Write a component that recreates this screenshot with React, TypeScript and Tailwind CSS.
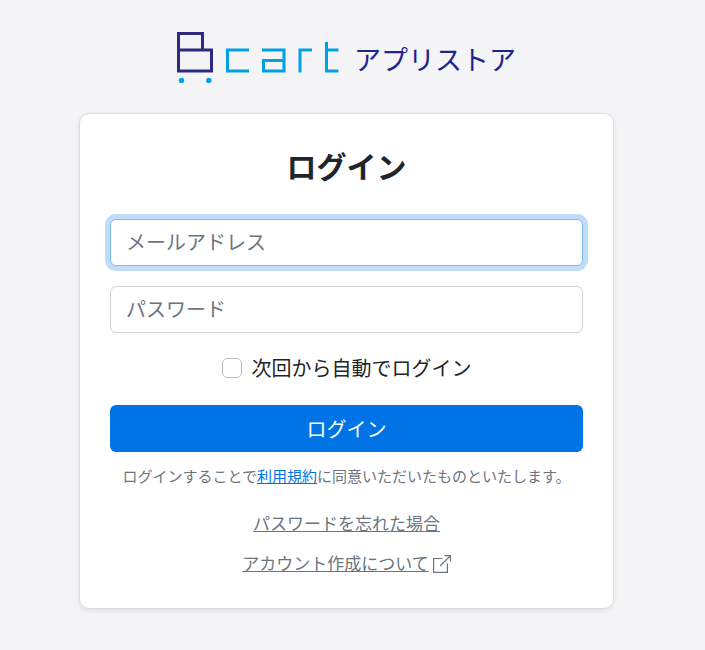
import { useState } from 'react'
import type { FormEvent, InputHTMLAttributes } from 'react'

function BcartLogo() {
  return (
    <svg width="162" height="52" viewBox="0 0 162 52" fill="none" strokeWidth="3" role="img" aria-label="Bcart">
      {/* カート */}
      <path d="M1.5 18V1.5H25.5V18M1.5 18H34.5V39H1.5Z" stroke="#2b2a80" />
      <circle cx="4.5" cy="48.4" r="2.7" fill="#00a0e6" />
      <circle cx="31.8" cy="48.4" r="2.7" fill="#00a0e6" />
      {/* c a r t */}
      <g stroke="#00a0e6">
        <path d="M72 18H50.5V39H72" />
        <path d="M85 18H107V39H86.5V28.5H107" />
        <path d="M123 40.5V18H135" />
        <path d="M149.5 10V39H161.5M149.5 18H161.5" />
      </g>
    </svg>
  )
}

function ExternalIcon() {
  return (
    <svg className="ml-1 inline-block align-[-3px]" width="18" height="18" viewBox="0 0 18 18" fill="none" stroke="currentColor" strokeWidth="1.2" aria-hidden="true">
      <path d="M9.5 3.5H0.6V17.4H14.4V8.5" />
      <path d="M7 11L17.2 0.8M11.5 0.6H17.4V6.5" />
    </svg>
  )
}

function TextField(props: InputHTMLAttributes<HTMLInputElement>) {
  return (
    <input
      {...props}
      className="block h-[47px] w-full rounded-md border border-[#ced4da] bg-white px-[15px] pb-[2px] text-[20px] text-[#212529] outline-none placeholder:text-[#6c757d] focus:border-[#80b9f3] focus:ring-[5px] focus:ring-[#bfdcf9]"
    />
  )
}

export default function App() {
  const [email, setEmail] = useState('')
  const [password, setPassword] = useState('')
  const [remember, setRemember] = useState(false)

  const handleSubmit = (e: FormEvent) => {
    e.preventDefault()
  }

  return (
    <div className="min-h-screen bg-[#f4f4f7] pt-8 pr-3 pb-10 font-['Noto_Sans_CJK_JP',sans-serif] text-[#212529]">
      <header className="flex h-[52px] justify-center gap-[15px]">
        <BcartLogo />
        <span className="text-[27px] leading-[54px] text-[#1d2590]">アプリストア</span>
      </header>

      <main className="mx-auto mt-[29px] max-w-[535px] rounded-[10px] border border-[#dcdddf] bg-white p-[30px] shadow-[0_2px_5px_rgba(0,0,0,0.08)]">
        <h1 className="mb-[33px] text-center text-[30px] leading-[42px] font-bold">ログイン</h1>

        <form onSubmit={handleSubmit}>
          <div className="flex flex-col gap-5">
            <TextField
              type="email"
              aria-label="メールアドレス"
              placeholder="メールアドレス"
              value={email}
              onChange={e => setEmail(e.target.value)}
              autoFocus
            />
            <TextField
              type="password"
              aria-label="パスワード"
              placeholder="パスワード"
              value={password}
              onChange={e => setPassword(e.target.value)}
            />
            <label className="flex items-center justify-center gap-[10px] text-[20px] leading-[30px]">
              <input
                type="checkbox"
                checked={remember}
                onChange={e => setRemember(e.target.checked)}
                className="size-5 appearance-none rounded-[5px] border border-[#bfbfbf] bg-white checked:border-[#0073e6] checked:bg-[#0073e6]"
              />
              次回から自動でログイン
            </label>
          </div>

          <button type="submit" className="mt-[22px] h-[47px] w-full rounded-md bg-[#0073e6] text-[20px] text-white hover:bg-[#0062c4]">
            ログイン
          </button>
        </form>

        <p className="mt-3 text-center text-[15px] leading-6 text-[#6c757d]">
          ログインすることで<a href="#terms" className="text-[#0073e6] underline">利用規約</a>に同意いただいたものといたします。
        </p>

        <div className="mt-[22px] flex flex-col items-center gap-[14px] pb-[2px] text-[17px] leading-[26px] text-[#6c757d]">
          <a href="#forgot" className="underline">パスワードを忘れた場合</a>
          <a href="#signup" className="underline">アカウント作成について<ExternalIcon /></a>
        </div>
      </main>
    </div>
  )
}
